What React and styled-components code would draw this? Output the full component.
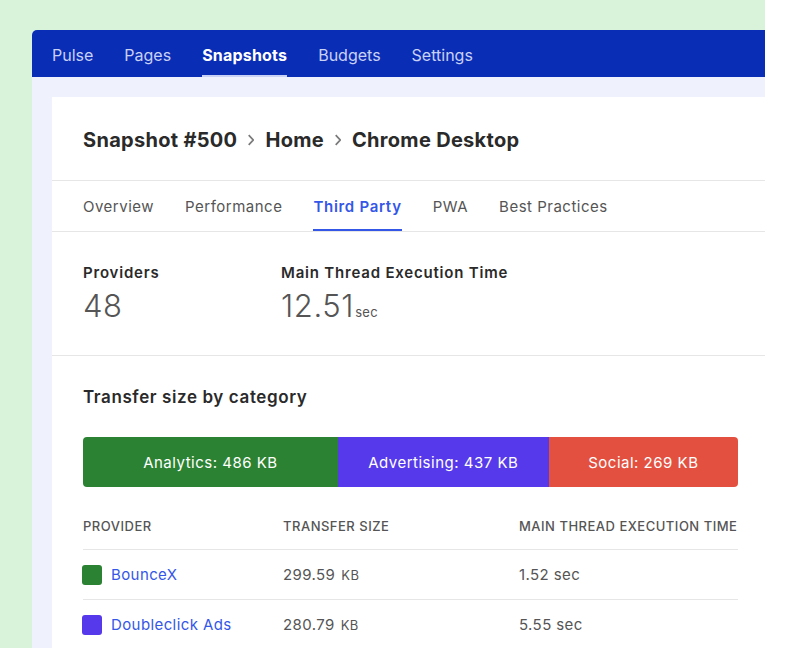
import styled, { createGlobalStyle } from 'styled-components'

const GlobalStyle = createGlobalStyle`
  html, body {
    margin: 0;
    padding: 0;
    background: #ffffff;
    font-family: Inter, "Noto Sans", "Liberation Sans", sans-serif;
    -webkit-font-smoothing: antialiased;
  }
`

const Stage = styled.div`
  box-sizing: border-box;
  width: 765px;
  height: 648px;
  padding: 30px 0 0 32px;
  background: #d9f2da;
  overflow: hidden;
`

const Window = styled.div`
  display: flex;
  flex-direction: column;
  height: 100%;
  background: #eff2fd;
  border-radius: 5px 0 0 0;
  overflow: hidden;
`

const Nav = styled.nav`
  flex-shrink: 0;
  display: flex;
  align-items: stretch;
  gap: 31px;
  height: 47px;
  padding-left: 20px;
  background: #0a2db6;
`

const NavItem = styled.a`
  display: flex;
  align-items: center;
  padding-top: 4px;
  box-sizing: border-box;
  font-size: 16px;
  font-weight: ${p => (p.$active ? 700 : 400)};
  color: ${p => (p.$active ? '#ffffff' : '#c9d1f4')};
  border-bottom: 2px solid ${p => (p.$active ? '#c9d1f4' : 'transparent')};
  letter-spacing: ${p => (p.$active ? '0.2px' : '0')};
`

const Content = styled.div`
  flex: 1;
  min-height: 0;
  display: flex;
  padding: 20px 0 0 20px;
`

const Card = styled.div`
  flex: 1;
  background: #ffffff;
`

const Header = styled.div`
  display: flex;
  align-items: center;
  height: 83px;
  padding: 0 31px;
  border-bottom: 1px solid #e6e6e6;
`

const Crumb = styled.h1`
  display: flex;
  align-items: center;
  gap: 11px;
  margin: 0;
  padding-top: 2px;
  font-size: 20px;
  font-weight: 700;
  color: #2a2a2a;
  letter-spacing: 0.3px;
`

const Chevron = () => (
  <svg width="6" height="12" viewBox="0 0 6 12" fill="none">
    <path d="M0.7 1.2 L5.2 6 L0.7 10.8" stroke="#7a7a7a" strokeWidth="1.7" />
  </svg>
)

const Tabs = styled.div`
  display: flex;
  gap: 31px;
  height: 50px;
  padding: 0 31px;
  border-bottom: 1px solid #e6e6e6;
`

const Tab = styled.div`
  display: flex;
  align-items: center;
  box-sizing: border-box;
  padding-top: 2px;
  font-size: 15px;
  font-weight: ${p => (p.$active ? 600 : 400)};
  color: ${p => (p.$active ? '#3457e8' : '#555')};
  border-bottom: 2px solid ${p => (p.$active ? '#3457e8' : 'transparent')};
  letter-spacing: ${p => (p.$active ? '0.7px' : '0.5px')};
`

const Stats = styled.div`
  display: grid;
  grid-template-columns: 198px 1fr;
  padding: 31px 31px 25px;
  border-bottom: 1px solid #e6e6e6;
`

const StatLabel = styled.div`
  font-size: 15px;
  font-weight: 600;
  line-height: 20px;
  color: #2a2a2a;
  letter-spacing: 0.8px;
`

const StatValue = styled.div`
  margin-top: 5px;
  font-size: 31px;
  line-height: 36px;
  font-weight: 300;
  color: #555;
  letter-spacing: 0.6px;
`

const StatUnit = styled.span`
  margin-left: 1px;
  font-size: 13px;
  font-weight: 400;
  letter-spacing: 0.3px;
`

const Section = styled.div`
  padding: 29px 27px 0 31px;
`

const SectionTitle = styled.h2`
  margin: 0;
  font-size: 17px;
  line-height: 24px;
  font-weight: 600;
  color: #2a2a2a;
  letter-spacing: 0.6px;
`

const Bar = styled.div`
  display: flex;
  height: 50px;
  margin-top: 28px;
  border-radius: 4px;
  overflow: hidden;
`

const Segment = styled.div`
  display: flex;
  align-items: center;
  justify-content: center;
  background: ${p => p.$color};
  color: #fff;
  font-size: 15px;
  letter-spacing: 0.5px;
`

const Table = styled.div`
  margin-top: 27px;
`

const Row = styled.div`
  display: grid;
  grid-template-columns: 200px 236px 1fr;
  height: ${p => (p.$head ? '35px' : '49px')};
  align-items: ${p => (p.$head ? 'start' : 'center')};
  border-bottom: 1px solid #e6e6e6;
`

const HeadCell = styled.div`
  font-size: 13px;
  line-height: 24px;
  font-weight: 500;
  color: #555;
  text-transform: uppercase;
  white-space: nowrap;
  letter-spacing: 0.5px;
`

const Cell = styled.div`
  display: flex;
  align-items: center;
  gap: ${p => (p.$gap ? '9px' : '0')};
  font-size: 15px;
  color: #555;
  letter-spacing: 0.4px;
`

const Swatch = styled.span`
  width: 20px;
  height: 20px;
  margin-left: -1px;
  border-radius: 3px;
  background: ${p => p.$color};
`

const Link = styled.a`
  color: #3457e8;
`

const Small = styled.span`
  margin-left: 6px;
  font-size: 13px;
`

const navItems = ['Pulse', 'Pages', 'Snapshots', 'Budgets', 'Settings']
const tabs = ['Overview', 'Performance', 'Third Party', 'PWA', 'Best Practices']

const segments = [
  { label: 'Analytics: 486 KB', color: '#2b8232', width: '38.9%' },
  { label: 'Advertising: 437 KB', color: '#5639ea', width: '32.2%' },
  { label: 'Social: 269 KB', color: '#e4503f', width: '28.9%' }
]

const rows = [
  { name: 'BounceX', color: '#2b8232', size: '299.59', time: '1.52 sec' },
  { name: 'Doubleclick Ads', color: '#5639ea', size: '280.79', time: '5.55 sec' }
]

export default function App() {
  return (
    <Stage>
      <GlobalStyle />
      <Window>
        <Nav>
          {navItems.map(n => (
            <NavItem key={n} $active={n === 'Snapshots'}>{n}</NavItem>
          ))}
        </Nav>
        <Content>
          <Card>
            <Header>
              <Crumb>
                <span>Snapshot #500</span>
                <Chevron />
                <span>Home</span>
                <Chevron />
                <span>Chrome Desktop</span>
              </Crumb>
            </Header>
            <Tabs>
              {tabs.map(t => (
                <Tab key={t} $active={t === 'Third Party'}>{t}</Tab>
              ))}
            </Tabs>
            <Stats>
              <div>
                <StatLabel>Providers</StatLabel>
                <StatValue>48</StatValue>
              </div>
              <div>
                <StatLabel>Main Thread Execution Time</StatLabel>
                <StatValue>12.51<StatUnit>sec</StatUnit></StatValue>
              </div>
            </Stats>
            <Section>
              <SectionTitle>Transfer size by category</SectionTitle>
              <Bar>
                {segments.map(s => (
                  <Segment key={s.label} $color={s.color} style={{ width: s.width }}>
                    {s.label}
                  </Segment>
                ))}
              </Bar>
              <Table>
                <Row $head>
                  <HeadCell>Provider</HeadCell>
                  <HeadCell>Transfer Size</HeadCell>
                  <HeadCell>Main Thread Execution Time</HeadCell>
                </Row>
                {rows.map(r => (
                  <Row key={r.name}>
                    <Cell $gap>
                      <Swatch $color={r.color} />
                      <Link>{r.name}</Link>
                    </Cell>
                    <Cell>{r.size}<Small>KB</Small></Cell>
                    <Cell>{r.time}</Cell>
                  </Row>
                ))}
              </Table>
            </Section>
          </Card>
        </Content>
      </Window>
    </Stage>
  )
}
